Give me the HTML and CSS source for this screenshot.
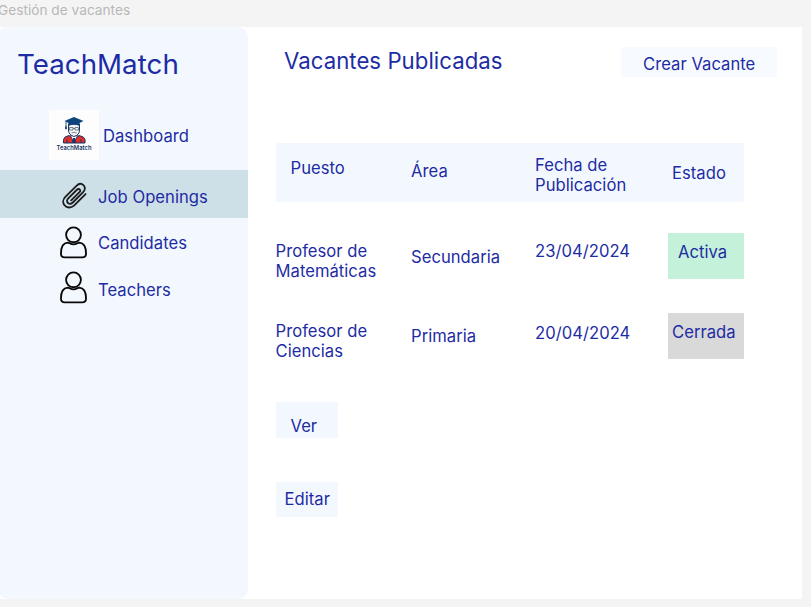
FILE: index.html
```html
<!DOCTYPE html>
<html lang="es">
<head>
<meta charset="utf-8">
<title>TeachMatch</title>
<link rel="stylesheet" href="styles.css">
</head>
<body>
<div class="frame-label">Gestión de vacantes</div>
<div class="frame">
  <aside class="sidebar">
    <div class="brand"><span>TeachMatch</span></div>
    <nav class="nav">
      <a class="nav-item dashboard">
        <svg class="logo" viewBox="0 0 50 50">
          <rect width="50" height="50" fill="#fdfdfe"/>
          <path d="M14.500 33V29.500Q15 26.500 20 25.500L25 29L30 25.500Q35.500 26.500 36 29.500V33Z" fill="#e02f2d" stroke="#173765"/>
          <path d="M21.500 25.500L25 33L28.500 25.500Z" fill="#fff" stroke="#173765" stroke-width=".8"/>
          <path d="M24 28h2l1 5h-4zM17.500 29.500h1V33h-1zM31.500 29.500h1V33h-1z" fill="#173765"/>
          <path d="M19.500 14h11v6q0 5-5.500 6.500Q19.500 25 19.500 20Z" fill="#f8f4f2" stroke="#173765"/>
          <path d="M20.500 17.500h3.500v2.500h-3.500zM26 17.500h3.500v2.500H26zM24 18.500h2M22.500 23q2.500-1.500 5 0" fill="none" stroke="#38506f" stroke-width=".7"/>
          <path d="M15.500 11L25 7L34.500 11L30.500 13V16Q25 13.500 19.500 16V13Z" fill="#0e437c"/>
          <path d="M17 11.500V17M16.500 16.500v2.500h1v-2.500" stroke="#173d70" stroke-width=".9" fill="none"/>
          <text x="25" y="40" text-anchor="middle" textLength="35" lengthAdjust="spacingAndGlyphs" class="logo-text">TeachMatch</text>
        </svg>
        <span>Dashboard</span>
      </a>
      <a class="nav-item active">
        <svg class="clip" viewBox="0 0 26 28" fill="none" stroke="#1c1d1e" stroke-width="1.900" stroke-linecap="round" stroke-linejoin="round">
          <path d="M24.500 12.500L12.500 24.500C9 27.500 4.500 27 2.500 24C.5 21.500 1 18 3.500 15.500L15 4C17.500 1.500 20.500 1.500 22.500 3.500C24.500 5.500 24 8.500 22 10.500L11.500 21C9.500 23 7.500 23 6.200 21.800C4.800 20.500 5 18.500 6.500 17L15.500 8C16.500 7 18 7 18.700 8C19.300 8.800 19 9.700 18.200 10.500L9.500 19"/>
        </svg>
        <span>Job Openings</span>
      </a>
      <a class="nav-item candidates">
        <svg class="person" viewBox="0 0 28 33" fill="none" stroke="#080808" stroke-width="1.900" stroke-linejoin="round">
          <circle cx="14" cy="8.500" r="7.700"/>
          <path d="M8 16.700C3.500 17 1 21.500 1 28C1 30.700 2.500 32 5 32H23C25.500 32 27 30.700 27 28C27 21.500 24.500 17 20 16.700C18 16.700 17 18.500 14 18.500C11 18.500 10 16.700 8 16.700Z"/>
        </svg>
        <span>Candidates</span>
      </a>
      <a class="nav-item teachers">
        <svg class="person" viewBox="0 0 28 33" fill="none" stroke="#080808" stroke-width="1.900" stroke-linejoin="round">
          <circle cx="14" cy="8.500" r="7.700"/>
          <path d="M8 16.700C3.500 17 1 21.500 1 28C1 30.700 2.500 32 5 32H23C25.500 32 27 30.700 27 28C27 21.500 24.500 17 20 16.700C18 16.700 17 18.500 14 18.500C11 18.500 10 16.700 8 16.700Z"/>
        </svg>
        <span>Teachers</span>
      </a>
    </nav>
  </aside>
  <main class="content">
    <header class="topbar">
      <h1>Vacantes Publicadas</h1>
      <button class="create">Crear Vacante</button>
    </header>
    <section class="table">
      <div class="row head">
        <div class="h-job">Puesto</div>
        <div class="h-area">Área</div>
        <div class="h-date">Fecha de<br>Publicación</div>
        <div class="h-state">Estado</div>
      </div>
      <div class="row first">
        <div class="job">Profesor de<br>Matemáticas</div>
        <div class="area">Secundaria</div>
        <div class="date">23/04/2024</div>
        <div class="state open">Activa</div>
      </div>
      <div class="row second">
        <div class="job">Profesor de<br>Ciencias</div>
        <div class="area">Primaria</div>
        <div class="date">20/04/2024</div>
        <div class="state closed">Cerrada</div>
      </div>
    </section>
    <div class="actions">
      <button class="view">Ver</button>
      <button class="edit">Editar</button>
    </div>
  </main>
</div>
</body>
</html>
```
FILE: styles.css
```css
* { box-sizing: border-box; }
body {
  margin: 0;
  height: 607px;
  overflow: hidden;
  background: #f4f4f4;
  color: #1e2ca4;
  font: 400 16.6px/20px Inter, sans-serif;
  letter-spacing: .04px;
}
button {
  display: block;
  border: 0;
  color: inherit;
  font: inherit;
  letter-spacing: inherit;
  text-align: left;
  white-space: nowrap;
  background: #f3f8ff;
}
.frame-label {
  height: 27px;
  margin-left: -2px;
  color: #b8b8b8;
  font-size: 13.7px;
  letter-spacing: 0;
}
.frame {
  display: flex;
  width: 802px;
  height: 572px;
  background: #fff;
}
.sidebar {
  width: 249.5px;
  margin-left: -2px;
  border-radius: 10px;
  background: #f3f8ff;
  flex: none;
}
.brand {
  height: 83px;
  padding: 20px 0 0 19px;
  font-size: 27.7px;
  line-height: 34px;
}
.nav-item {
  display: flex;
  align-items: flex-start;
}
.dashboard { height: 60px; padding-left: 51px; }
.logo { width: 50px; height: 50px; margin-right: 4px; }
.logo-text { font: 600 6.4px Inter, sans-serif; fill: #173765; }
.dashboard span { margin-top: 16px; }
.active { height: 48px; padding-left: 63.5px; background: #cee0e7; }
.clip { width: 25px; height: 27px; margin: 12px 11.5px 0 0; }
.active span { margin-top: 17px; }
.candidates { height: 46px; padding-left: 62px; }
.person { width: 27px; height: 33px; margin: 8px 11px 0 0; }
.candidates span { margin-top: 15px; }
.teachers { padding-left: 61.5px; }
.teachers .person { margin: 7px 11.5px 0 0; }
.teachers span { margin-top: 16px; }
.content { flex: 1; padding-left: 28px; }
.topbar {
  display: flex;
  justify-content: space-between;
  height: 116px;
  padding: 20px 25px 0 8.500px;
}
h1 {
  margin: 0;
  font-size: 22.2px;
  font-weight: inherit;
  line-height: 28px;
}
.create { width: 156px; height: 30px; padding: 4px 0 0 22px; background: #f7fbff; }
.row {
  display: grid;
  grid-template-columns: 135.5px 124px 133px 76px;
  width: 468.5px;
}
.head { height: 59px; background: #f3f8ff; }
.h-job { padding: 15px 0 0 15px; }
.h-area { padding-top: 18px; }
.h-date { padding-top: 12px; }
.h-state { padding: 20px 0 0 4px; }
.first { height: 80px; margin-top: 31px; }
.first .job, .first .date { padding-top: 8px; }
.first .area { padding-top: 14px; }
.state { height: 46px; }
.open { padding: 9px 0 0 10px; background: #c4f1d9; }
.second { height: 89px; }
.second .job { padding-top: 8px; }
.second .area { padding-top: 13px; }
.second .date { padding-top: 10px; }
.closed { padding: 9px 0 0 4px; background: #d9d9d9; }
.actions { display: flex; flex-direction: column; gap: 44px; }
.actions button { width: 62px; height: 35.500px; }
.actions .view { padding: 12px 0 0 15px; }
.actions .edit { padding: 0 0 0 9px; }
```
